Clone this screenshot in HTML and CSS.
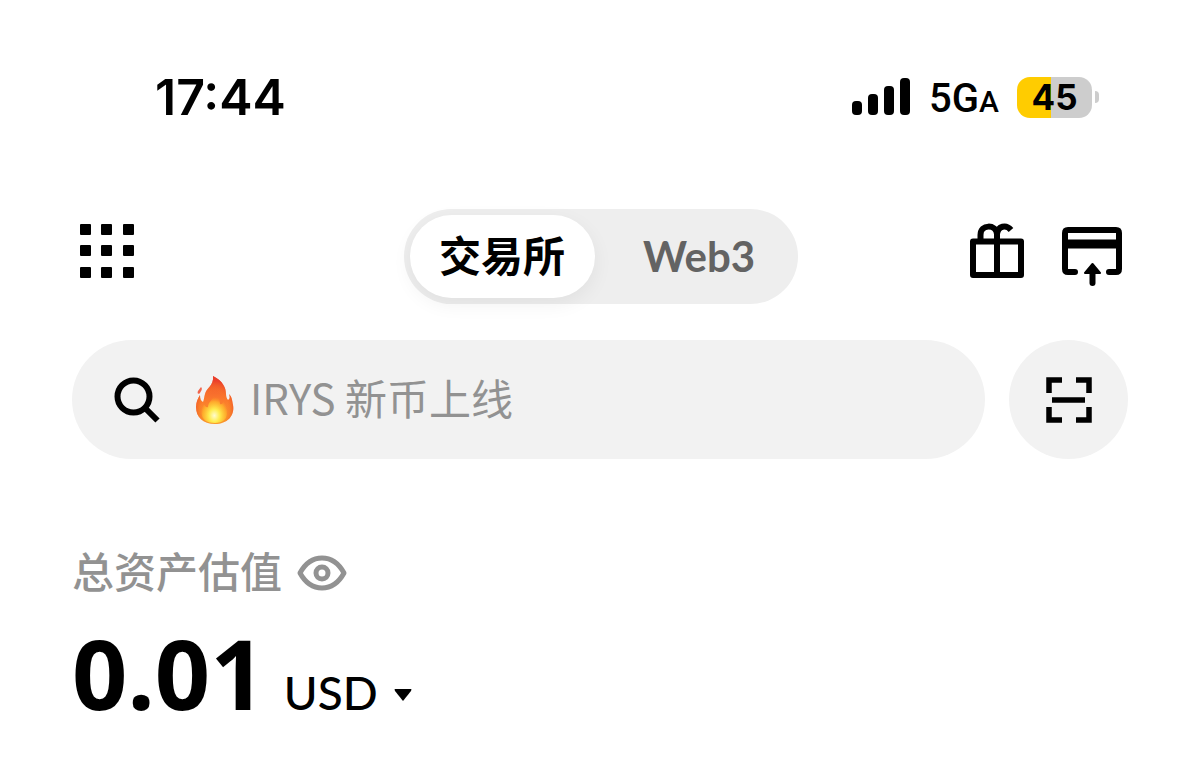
FILE: index.html
```html
<!DOCTYPE html>
<html lang="zh-CN">

<head>
    <meta charset="UTF-8">
    <meta name="viewport" content="width=device-width, initial-scale=1.0">
    <title>总资产估值</title>
    <link rel="stylesheet" href="styles.css">
</head>

<body>

    <div class="status-bar">
        <div class="time">17:44</div>
        <div class="status-icons">
            <svg class="signal" width="60" height="38" viewBox="0 0 60 38">
                <rect x="1" y="23" width="10" height="14" rx="4" />
                <rect x="17" y="16" width="10" height="21" rx="4" />
                <rect x="33" y="8" width="10" height="29" rx="4" />
                <rect x="49" y="0" width="10" height="37" rx="4" />
            </svg>
            <div class="network">5G<span class="network-small">A</span></div>
            <div class="battery">
                <span class="battery-level">45</span>
                <span class="battery-tip"></span>
            </div>
        </div>
    </div>

    <header class="top-nav">
        <button class="icon-button menu-button" type="button" aria-label="菜单">
            <svg width="56" height="56" viewBox="0 0 56 56">
                <rect x="1" y="1" width="11" height="11" rx="1" />
                <rect x="22" y="1" width="11" height="11" rx="1" />
                <rect x="44" y="1" width="11" height="11" rx="1" />
                <rect x="1" y="22" width="11" height="11" rx="1" />
                <rect x="22" y="22" width="11" height="11" rx="1" />
                <rect x="44" y="22" width="11" height="11" rx="1" />
                <rect x="1" y="44" width="11" height="11" rx="1" />
                <rect x="22" y="44" width="11" height="11" rx="1" />
                <rect x="44" y="44" width="11" height="11" rx="1" />
            </svg>
        </button>
        <div class="tabs">
            <button class="tab tab-active" type="button">交易所</button>
            <button class="tab" type="button">Web3</button>
        </div>
        <div class="nav-actions">
            <button class="icon-button" type="button" aria-label="奖励">
                <svg width="54" height="64" viewBox="0 0 54 64" fill="none" stroke="#000">
                    <path d="M3 18.500H51V52H3Z" stroke-width="6" stroke-linejoin="round" />
                    <path d="M27 10V52" stroke-width="6" />
                    <path d="M10.500 18V12C10.500 1 26 1 27 11C28 3 36 1 41 7" stroke-width="6" />
                </svg>
            </button>
            <button class="icon-button" type="button" aria-label="充值">
                <svg width="60" height="64" viewBox="0 0 60 64" fill="none" stroke="#000">
                    <path d="M13 49H6Q3 49 3 46V10Q3 7 6 7H54Q57 7 57 10V46Q57 49 54 49H47" stroke-width="6" stroke-linecap="round" />
                    <path d="M3 21H57" stroke-width="9" />
                    <path d="M30.500 60V49" stroke-width="6" stroke-linecap="round" />
                    <path d="M30.500 41L38 50H23Z" fill="#000" stroke-width="2" stroke-linejoin="round" />
                </svg>
            </button>
        </div>
    </header>

    <div class="search-row">
        <label class="search-box">
            <svg class="search-icon" width="46" height="46" viewBox="0 0 46 46" fill="none" stroke="#000">
                <circle cx="19.500" cy="19.500" r="16" stroke-width="6" />
                <path d="M31 31L43.500 43.500" stroke-width="6" />
            </svg>
            <svg class="fire-icon" width="40" height="50" viewBox="0 0 40 50">
                <defs>
                    <linearGradient id="flame" x1="0" y1="0" x2="0" y2="1">
                        <stop offset="0" stop-color="#ee4b30" />
                        <stop offset="0.500" stop-color="#fb7a2c" />
                        <stop offset="1" stop-color="#f9a02e" />
                    </linearGradient>
                    <radialGradient id="edge" cx="0.500" cy="0.660" r="0.560">
                        <stop offset="0.550" stop-color="#ff8a1f" stop-opacity="0" />
                        <stop offset="1" stop-color="#e93a2a" stop-opacity="0.800" />
                    </radialGradient>
                    <radialGradient id="core" cx="0.500" cy="0.760" r="0.600">
                        <stop offset="0" stop-color="#fffbd0" />
                        <stop offset="0.350" stop-color="#ffed4e" />
                        <stop offset="0.750" stop-color="#ffb52c" stop-opacity="0.800" />
                        <stop offset="1" stop-color="#ff8f28" stop-opacity="0" />
                    </radialGradient>
                </defs>
                <path fill="url(#flame)" d="M18 1C28 6 31 13 31 19C31 22 32 24 33 25C35 24 35 22 34 19C37 22 37 25 38 30C40 41 32 49 20 49C8 49 1 42 1 32C1 27 3 23 5 20C5 24 6 26 8 27C9 25 9 22 10 19C11 13 19 11 18 1Z" />
                <path fill="url(#edge)" d="M18 1C28 6 31 13 31 19C31 22 32 24 33 25C35 24 35 22 34 19C37 22 37 25 38 30C40 41 32 49 20 49C8 49 1 42 1 32C1 27 3 23 5 20C5 24 6 26 8 27C9 25 9 22 10 19C11 13 19 11 18 1Z" />
                <path fill="url(#core)" d="M19 17C23 20 25 24 25 29C27 30 28 28 29 26C33 33 36 48 20 48C4 48 5 35 9 29C10 31 11 33 13 32C13 26 20 24 19 17Z" />
                <path fill="#f1644c" d="M6 12C8 14 6 16 5 18C3 20 2 18 3 16Z" />
            </svg>
            <input class="search-input" type="text" placeholder="IRYS 新币上线" aria-label="搜索">
        </label>
        <button class="scan-button" type="button" aria-label="扫一扫">
            <svg width="46" height="46" viewBox="0 0 46 46" fill="none" stroke="#000" stroke-width="5.500">
                <path d="M3 16V3H16M30 3H43V16M43 30V43H30M16 43H3V30" />
                <path d="M6 23H39" />
            </svg>
        </button>
    </div>

    <main class="assets">
        <div class="assets-label">
            <span class="assets-title">总资产估值</span>
            <button class="icon-button" type="button" aria-label="隐藏资产">
                <svg width="50" height="38" viewBox="0 0 50 38" fill="none" stroke="#929292" stroke-width="5">
                    <path d="M3 19C14 -1 36 -1 47 19C36 39 14 39 3 19Z" stroke-linejoin="round" />
                    <circle cx="25" cy="19" r="6" />
                </svg>
            </button>
        </div>
        <div class="assets-value">
            <span class="amount">0.01</span>
            <button class="currency" type="button">USD
                <svg class="caret" width="18" height="12" viewBox="0 0 18 12">
                    <path d="M1 0H17Q18 0 17 2L9 12L1 2Q0 0 1 0Z" />
                </svg>
            </button>
        </div>
    </main>

</body>

</html>
```
FILE: styles.css
```css
* {
    box-sizing: border-box;
}

body {
    margin: 0;
    padding: 67px 72px 40px;
    background-color: #fff;
    color: #000;
    font-family: "Noto Sans", "Noto Sans CJK SC", sans-serif;
}

button {
    margin: 0;
    padding: 0;
    border: none;
    background: none;
    color: inherit;
    font: inherit;
    cursor: pointer;
}

svg {
    display: block;
    flex: none;
}

.status-bar {
    display: flex;
    align-items: center;
    justify-content: space-between;
    height: 60px;
    padding: 0 29px 0 83px;
}

.time {
    font-family: Inter, sans-serif;
    font-size: 50px;
    font-weight: 600;
    line-height: 60px;
}

.status-icons {
    display: flex;
    align-items: center;
    gap: 18px;
}

.network {
    padding-top: 6px;
    font-family: Roboto, sans-serif;
    font-size: 40px;
    font-weight: 500;
    line-height: 60px;
}

.network-small {
    font-size: 30px;
}

.battery {
    display: flex;
    align-items: center;
    gap: 3px;
}

.battery-level {
    width: 75px;
    height: 41px;
    border-radius: 13px;
    background: linear-gradient(to right, #fc0 45%, #cdcdcd 45%);
    font-family: Inter, sans-serif;
    font-size: 35px;
    font-weight: 700;
    line-height: 40px;
    text-align: center;
}

.battery-tip {
    width: 4px;
    height: 12px;
    border-radius: 0 4px 4px 0;
    background-color: #cdcdcd;
}

.top-nav {
    display: grid;
    grid-template-columns: 1fr auto 1fr;
    align-items: center;
    margin-top: 82px;
    padding: 0 6px 0 7px;
}

.menu-button {
    justify-self: start;
    padding-bottom: 12px;
}

.tabs {
    display: flex;
    gap: 12px;
    padding: 6px;
    border-radius: 48px;
    background-color: #eee;
}

.tab {
    width: 185px;
    height: 83px;
    padding-bottom: 2px;
    border-radius: 42px;
    color: #636363;
    font-family: Lato, "Noto Sans CJK SC", sans-serif;
    font-size: 42px;
    font-weight: 700;
    line-height: 60px;
}

.tab-active {
    background-color: #fff;
    color: #000;
    box-shadow: 0 6px 20px rgba(0, 0, 0, 0.06);
}

.nav-actions {
    display: flex;
    justify-content: flex-end;
    gap: 38px;
    padding-bottom: 4px;
}

.search-row {
    display: flex;
    gap: 24px;
    margin-top: 36px;
}

.search-box {
    display: flex;
    flex: 1;
    align-items: center;
    min-width: 0;
    height: 119px;
    padding: 0 42px;
    border-radius: 60px;
    background-color: #f2f2f2;
}

.fire-icon {
    margin: 0 15px 0 35px;
}

.search-input {
    flex: 1;
    min-width: 0;
    padding: 0 0 6px;
    border: none;
    outline: none;
    background: none;
    font-family: "Noto Sans CJK SC", sans-serif;
    font-size: 42px;
    line-height: 60px;
}

.search-input::placeholder {
    color: #929292;
    opacity: 1;
}

.scan-button {
    display: flex;
    align-items: center;
    justify-content: center;
    width: 119px;
    height: 119px;
    border-radius: 50%;
    background-color: #f2f2f2;
}

.assets {
    margin-top: 81px;
}

.assets-label {
    display: flex;
    align-items: center;
    gap: 15px;
    color: #929292;
    font-family: "Noto Sans CJK SC", sans-serif;
    font-size: 42px;
    font-weight: 500;
    line-height: 60px;
}

.assets-title {
    padding-bottom: 6px;
}

.assets-value {
    display: flex;
    align-items: baseline;
    gap: 18px;
}

.amount {
    font-size: 97px;
    font-weight: 700;
    line-height: 132px;
}

.currency {
    display: flex;
    align-items: center;
    gap: 16px;
    font-family: Lato, sans-serif;
    font-size: 46px;
    font-weight: 500;
    line-height: 60px;
}

.caret {
    margin-top: 4px;
}
```
